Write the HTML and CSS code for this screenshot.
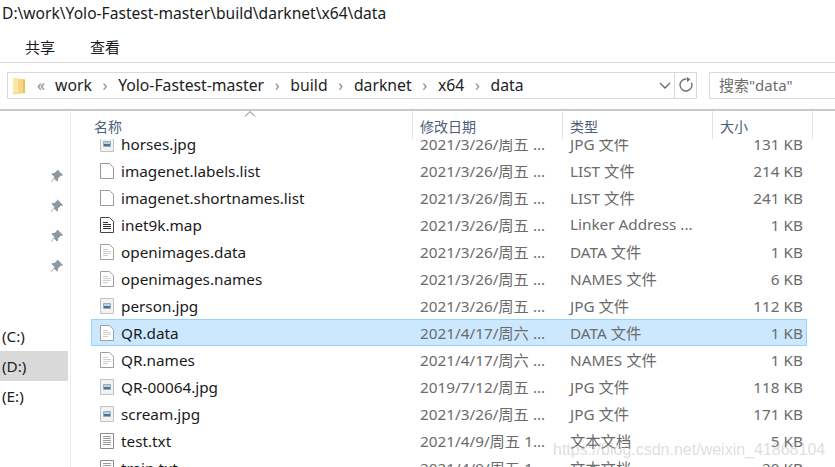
FILE: index.html
```html
<!DOCTYPE html>
<html lang="zh-CN">
<head>
    <meta charset="UTF-8">
    <title>data</title>
    <link rel="stylesheet" href="styles.css">
</head>
<body>
<svg class="defs" width="0" height="0">
    <symbol id="blank" viewBox="0 0 14 16"><path d="M.5.5h9l4 4v11H.5z" fill="#fff" stroke="#9a9a9a"/></symbol>
    <symbol id="doc" viewBox="0 0 14 16"><path d="M.5.5h9l4 4v11H.5z" fill="#fff" stroke="#a0a0a0"/><path d="M3 5.500h5M3 7.500h8M3 9.500h8M3 11.500h5" stroke="#cfcfcf" fill="none"/></symbol>
    <symbol id="txt" viewBox="0 0 14 16"><path d="M.5.500h13v15H.5z" fill="#fff" stroke="#8a8a8a"/><path d="M3 3.500h8M3 5.500h8M3 7.500h8M3 9.500h8M3 11.500h8" stroke="#9a9a9a" fill="none"/></symbol>
    <symbol id="map" viewBox="0 0 14 16"><path d="M.5.500h9l4 4v11H.5z" fill="#fff" stroke="#444"/><path d="M3 5.500h5M3 7.500h8M3 9.500h8M3 11.500h8" stroke="#333" fill="none"/></symbol>
    <symbol id="jpg" viewBox="0 0 14 16"><path d="M.5.500h13v15H.5z" fill="#f2f2f2" stroke="#c2c2c2"/><path d="M3.500 5.500h7v5h-7z" fill="#fff" stroke="#a0a8b0"/><path d="M4 6h6v2H4z" fill="#b4d4ec"/><path d="M4 8h6v2H4z" fill="#44749f"/></symbol>
    <symbol id="pin" viewBox="0 0 14 14"><path d="M8 1l5 5-1 1-1-.5-3 3 0 2-1 1-3-3L1.500 13 1 12.500 4.500 8l-3-3 1-1 2 0 3-3-.5-1z" fill="#8d99a3"/></symbol>
</svg>

<div class="title">D:\work\Yolo-Fastest-master\build\darknet\x64\data</div>

<div class="tabs">
    <span>共享</span>
    <span>查看</span>
</div>

<div class="navbar">
    <div class="address">
        <svg class="folder" width="13" height="17" viewBox="0 0 13 17"><path d="M0 1h5l1 1h6v14l-7 1H0z" fill="#f6d77f"/><path d="M0 1h5v15H0z" fill="#fbe7a6"/><path d="M10 3h2v13h-2z" fill="#e9bf5a"/></svg>
        <span class="chev">«</span>
        <span class="crumb">work</span><span class="sep">›</span>
        <span class="crumb">Yolo-Fastest-master</span><span class="sep">›</span>
        <span class="crumb">build</span><span class="sep">›</span>
        <span class="crumb">darknet</span><span class="sep">›</span>
        <span class="crumb">x64</span><span class="sep">›</span>
        <span class="crumb">data</span>
        <svg class="dropdown" width="12" height="7" viewBox="0 0 12 7"><path d="M1 1l5 5 5-5" fill="none" stroke="#666" stroke-width="1.300"/></svg>
        <div class="refresh">
            <svg width="16" height="16" viewBox="0 0 16 16"><path d="M5 2.800A6 6 0 1 0 11 2.800" transform="rotate(35 8 8)" fill="none" stroke="#707070" stroke-width="1.400"/><path d="M9 0l3.500 2.500L9 5z" fill="#707070"/></svg>
        </div>
    </div>
    <div class="search">搜索"data"</div>
</div>

<div class="main">
    <div class="sidebar">
        <div class="pins">
            <svg class="pin"><use href="#pin"/></svg>
            <svg class="pin"><use href="#pin"/></svg>
            <svg class="pin"><use href="#pin"/></svg>
            <svg class="pin"><use href="#pin"/></svg>
        </div>
        <div class="drives">
            <div class="drive">(C:)</div>
            <div class="drive selected">(D:)</div>
            <div class="drive">(E:)</div>
        </div>
    </div>
    <div class="content">
        <svg class="sort" width="12" height="6" viewBox="0 0 12 6"><path d="M1 5.500l5-5 5 5" fill="none" stroke="#777"/></svg>
        <div class="head">
            <div class="h-name">名称</div>
            <div class="h-date">修改日期</div>
            <div class="h-type">类型</div>
            <div class="h-size">大小</div>
        </div>
        <div class="viewport">
            <div class="list">
                <div class="row"><svg class="ico"><use href="#jpg"/></svg><span class="name">horses.jpg</span><span class="date">2021/3/26/周五 ...</span><span class="type">JPG 文件</span><span class="size">131 KB</span></div>
                <div class="row"><svg class="ico"><use href="#blank"/></svg><span class="name">imagenet.labels.list</span><span class="date">2021/3/26/周五 ...</span><span class="type">LIST 文件</span><span class="size">214 KB</span></div>
                <div class="row"><svg class="ico"><use href="#blank"/></svg><span class="name">imagenet.shortnames.list</span><span class="date">2021/3/26/周五 ...</span><span class="type">LIST 文件</span><span class="size">241 KB</span></div>
                <div class="row"><svg class="ico"><use href="#map"/></svg><span class="name">inet9k.map</span><span class="date">2021/3/26/周五 ...</span><span class="type">Linker Address ...</span><span class="size">1 KB</span></div>
                <div class="row"><svg class="ico"><use href="#doc"/></svg><span class="name">openimages.data</span><span class="date">2021/3/26/周五 ...</span><span class="type">DATA 文件</span><span class="size">1 KB</span></div>
                <div class="row"><svg class="ico"><use href="#doc"/></svg><span class="name">openimages.names</span><span class="date">2021/3/26/周五 ...</span><span class="type">NAMES 文件</span><span class="size">6 KB</span></div>
                <div class="row"><svg class="ico"><use href="#jpg"/></svg><span class="name">person.jpg</span><span class="date">2021/3/26/周五 ...</span><span class="type">JPG 文件</span><span class="size">112 KB</span></div>
                <div class="row active"><svg class="ico"><use href="#doc"/></svg><span class="name">QR.data</span><span class="date">2021/4/17/周六 ...</span><span class="type">DATA 文件</span><span class="size">1 KB</span></div>
                <div class="row"><svg class="ico"><use href="#doc"/></svg><span class="name">QR.names</span><span class="date">2021/4/17/周六 ...</span><span class="type">NAMES 文件</span><span class="size">1 KB</span></div>
                <div class="row"><svg class="ico"><use href="#jpg"/></svg><span class="name">QR-00064.jpg</span><span class="date">2019/7/12/周五 ...</span><span class="type">JPG 文件</span><span class="size">118 KB</span></div>
                <div class="row"><svg class="ico"><use href="#jpg"/></svg><span class="name">scream.jpg</span><span class="date">2021/3/26/周五 ...</span><span class="type">JPG 文件</span><span class="size">171 KB</span></div>
                <div class="row"><svg class="ico"><use href="#txt"/></svg><span class="name">test.txt</span><span class="date">2021/4/9/周五 1...</span><span class="type">文本文档</span><span class="size">5 KB</span></div>
                <div class="row"><svg class="ico"><use href="#txt"/></svg><span class="name">train.txt</span><span class="date">2021/4/9/周五 1...</span><span class="type">文本文档</span><span class="size">20 KB</span></div>
            </div>
        </div>
    </div>
</div>

<div class="watermark">https://blog.csdn.net/weixin_41868104</div>
</body>
</html>
```

FILE: styles.css
```css
html, body {
    margin: 0;
    height: 467px;
    overflow: hidden;
}
body {
    background: #fff;
    color: #1a1a1a;
    font-family: "Noto Sans", "Noto Sans CJK SC", sans-serif;
    font-size: 15.300px;
}
.defs {
    display: block;
    height: 0;
}
.title {
    height: 28px;
    line-height: 27px;
    padding-left: 2px;
    font-size: 15.600px;
    white-space: nowrap;
}
.tabs {
    height: 35px;
    display: flex;
    gap: 35px;
    padding-left: 25px;
    line-height: 38px;
    font-size: 15px;
    border-bottom: 1px solid #d9d9d9;
    box-sizing: border-box;
}
.navbar {
    height: 48px;
    display: flex;
    align-items: center;
    padding-left: 7px;
    padding-bottom: 2px;
    gap: 12px;
    border-bottom: 2px solid #c8c8c8;
    box-sizing: border-box;
}
.address {
    width: 690px;
    height: 27px;
    box-sizing: border-box;
    border: 1px solid #d9d9d9;
    display: flex;
    align-items: center;
    padding-left: 5px;
    flex-shrink: 0;
    font-size: 15.750px;
}
.folder {
    margin-right: 11px;
}
.chev {
    color: #888;
    width: 18px;
}
.crumb {
    color: #222;
}
.sep {
    color: #888;
    width: 26.300px;
    text-align: center;
}
.dropdown {
    margin-left: auto;
    margin-right: 3px;
}
.refresh {
    width: 21px;
    height: 25px;
    border-left: 1px solid #d9d9d9;
    display: flex;
    align-items: center;
    justify-content: center;
}
.search {
    flex: 1;
    height: 27px;
    line-height: 25px;
    box-sizing: border-box;
    border: 1px solid #d9d9d9;
    border-right: 0;
    padding-left: 9px;
    color: #6d6d6d;
    font-size: 15px;
    white-space: nowrap;
}
.main {
    display: flex;
    height: 356px;
}
.sidebar {
    width: 71px;
    box-sizing: border-box;
    border-right: 1px solid #eee;
    flex-shrink: 0;
}
.pins {
    display: flex;
    flex-direction: column;
    align-items: flex-end;
    gap: 16px;
    padding: 58px 0 0;
    margin-right: 6px;
}
.pin {
    width: 14px;
    height: 14px;
}
.drives {
    margin-top: 48px;
}
.drive {
    height: 30px;
    line-height: 30px;
    padding-left: 2px;
    color: #222;
    margin-right: 2px;
}
.drive.selected {
    background: #d9d9d9;
}
.content {
    flex: 1;
    position: relative;
    min-width: 0;
}
.sort {
    position: absolute;
    left: 173px;
    top: 0;
}
.head {
    display: flex;
    height: 28px;
    color: #4c607a;
    font-size: 14px;
    line-height: 31px;
}
.head > div {
    box-sizing: border-box;
    border-right: 1px solid #e5e5e5;
}
.h-name {
    width: 342px;
    padding-left: 23px;
}
.h-date {
    width: 150px;
    padding-left: 7px;
}
.h-type {
    width: 150px;
    padding-left: 7px;
}
.h-size {
    width: 100px;
    padding-left: 7px;
}
.viewport {
    height: 328px;
    overflow: hidden;
}
.list {
    margin-top: -9px;
}
.row {
    height: 27px;
    box-sizing: border-box;
    display: flex;
    align-items: center;
    width: 716px;
    margin-left: 20px;
    white-space: nowrap;
    color: #6b6b6b;
}
.row.active {
    background: #cce8ff;
    border: 1px solid #99d1ff;
}
.ico {
    width: 14px;
    height: 16px;
    margin-left: 9px;
    margin-right: 7px;
    flex-shrink: 0;
}
.active .ico {
    margin-left: 8px;
}
.name {
    width: 292px;
    margin-right: 7px;
    color: #1a1a1a;
}
.date {
    width: 150px;
    margin-bottom: 2px;
}
.type {
    width: 120px;
    margin-bottom: 2px;
}
.size {
    width: 113px;
    text-align: right;
}
.watermark {
    position: absolute;
    left: 553px;
    top: 441px;
    color: rgba(170, 170, 170, .4);
    font-family: "Liberation Sans", sans-serif;
    font-size: 16px;
    white-space: nowrap;
}
```
